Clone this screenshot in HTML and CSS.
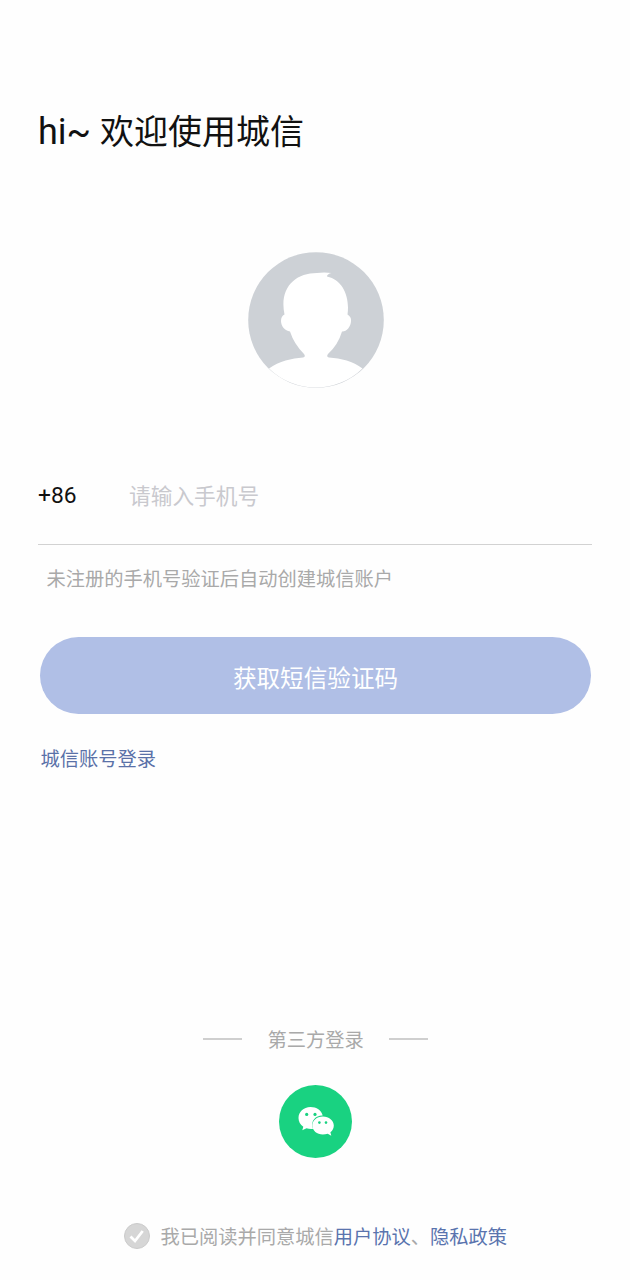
FILE: index.html
```html
<!DOCTYPE html>
<html lang="zh-CN">
<head>
<meta charset="utf-8">
<title>城信</title>
<link rel="stylesheet" href="styles.css">
</head>
<body>
<main class="page">
  <h1 class="title"><span class="greeting">hi~ </span>欢迎使用城信</h1>
  <svg class="avatar" viewBox="0 0 136 136">
    <circle cx="68" cy="68" r="67.8" fill="#cdd1d6"/>
    <path fill="#fff" d="M21 116.500C31 109 44 106.500 55 105.500Q58 105 56 102Q46 92 42 79.500C37 79 33 74 33 69Q33 64 36.500 62.500C31 36 47 21 69 21Q76 20 83.500 21Q79 22 79 24.500C95 28 102 45 99.500 62.500Q103.500 65 103 69C103 75 98 80 94 79.500Q90 93 80 102Q78 105 81 105.500C93 106.500 105 109 114.500 116.500A67 67 0 0 1 21 116.500Z"/>
  </svg>
  <div class="phone">
    <span class="code">+86</span>
    <span class="placeholder">请输入手机号</span>
  </div>
  <p class="hint">未注册的手机号验证后自动创建城信账户</p>
  <button class="submit">获取短信验证码</button>
  <a class="account">城信账号登录</a>
  <div class="divider"><i class="rule"></i><span>第三方登录</span><i class="rule"></i></div>
  <svg class="wechat" viewBox="0 0 73 73">
    <circle cx="36.500" cy="36.500" r="36.500" fill="#19d281"/>
    <path fill="#fff" d="M31.500 22C24.500 22 19.500 27 19.500 33C19.500 36.500 21.300 39.700 24.300 41.700L23.300 45.300L27.500 43.300Q30 44.100 34 43.900C31 35.500 37 30.200 43.700 30.400C42.500 25.500 37.500 22 31.500 22Z"/>
    <path fill="#fff" d="M43.800 31.500C37.700 31.500 33.300 35.700 33.300 40.500C33.300 45.600 38 49.500 43.800 49.500Q46.300 49.500 48.700 48.700L52.300 50.700L51.400 47.300C53.600 45.600 54.800 43.200 54.800 40.500C54.800 35.700 50 31.500 43.800 31.500Z"/>
    <g fill="#19d281"><circle cx="27.700" cy="29.400" r="1.600"/><circle cx="36" cy="29.400" r="1.600"/><circle cx="40.400" cy="37.600" r="1.300"/><circle cx="47" cy="37.600" r="1.300"/></g>
  </svg>
  <div class="agreement">
    <svg class="check" viewBox="0 0 26 26"><circle cx="13" cy="13" r="12.500" fill="#d6d6d6" stroke="#cbcbcb"/><path d="M6.500 13.500L11 18L18.700 8" fill="none" stroke="#fff" stroke-width="2.800"/></svg>
    <span class="terms">我已阅读并同意城信<a class="link">用户协议</a>、<a class="link">隐私政策</a></span>
  </div>
</main>
</body>
</html>
```
FILE: styles.css
```css
* { box-sizing: border-box; }
body {
  margin: 0;
  background: #fefefe;
  font-family: Roboto, "Noto Sans CJK SC", sans-serif;
}
.page {
  display: flex;
  flex-direction: column;
  height: 1280px;
  padding: 107px 38px 0;
  overflow: hidden;
  font-size: 19.25px;
  line-height: 28px;
  color: #a9a9a9;
}
.title {
  height: 50px;
  margin: 0;
  font-size: 34px;
  font-weight: 400;
  line-height: 50px;
  color: #111;
}
.greeting {
  font-size: 36px;
}
.avatar {
  width: 136px;
  height: 136px;
  margin: 95px 0 0 210px;
}
.phone {
  display: flex;
  height: 99px;
  margin-top: 58px;
  width: 554px;
  padding-top: 32px;
  border-bottom: 1px solid #d2d2d2;
  line-height: 34px;
}
.code {
  width: 91px;
  padding-top: 1px;
  font-size: 22.8px;
  color: #111;
}
.placeholder {
  padding-top: 2px;
  font-size: 21.7px;
  color: #c9c9ce;
}
.hint { margin: 21px 0 0 8.5px; }
.submit {
  width: 551px;
  height: 77px;
  margin: 43.4px 0 0 2px;
  padding: 7px 0 0;
  border: 0;
  border-radius: 39px;
  background: #b0bfe6;
  color: #fff;
  font: inherit;
  font-size: 23.6px;
}
.account {
  margin: 31.6px 0 0 2.500px;
  color: #5a71a8;
}
.divider {
  display: flex;
  align-items: center;
  gap: 25.5px;
  margin: 253px 0 0 165px;
}
.rule {
  width: 39px;
  height: 2px;
  margin-top: -4px;
  background: #cfcfcf;
}
.wechat {
  width: 73px;
  height: 73px;
  margin: 30px 0 0 241px;
}
.agreement {
  display: flex;
  align-items: center;
  gap: 10.5px;
  height: 28px;
  margin: 64px 0 0 86px;
}
.check {
  width: 26px;
  height: 26px;
}
.terms { padding-top: 5px; }
.link { color: #5a74ae; }
```
